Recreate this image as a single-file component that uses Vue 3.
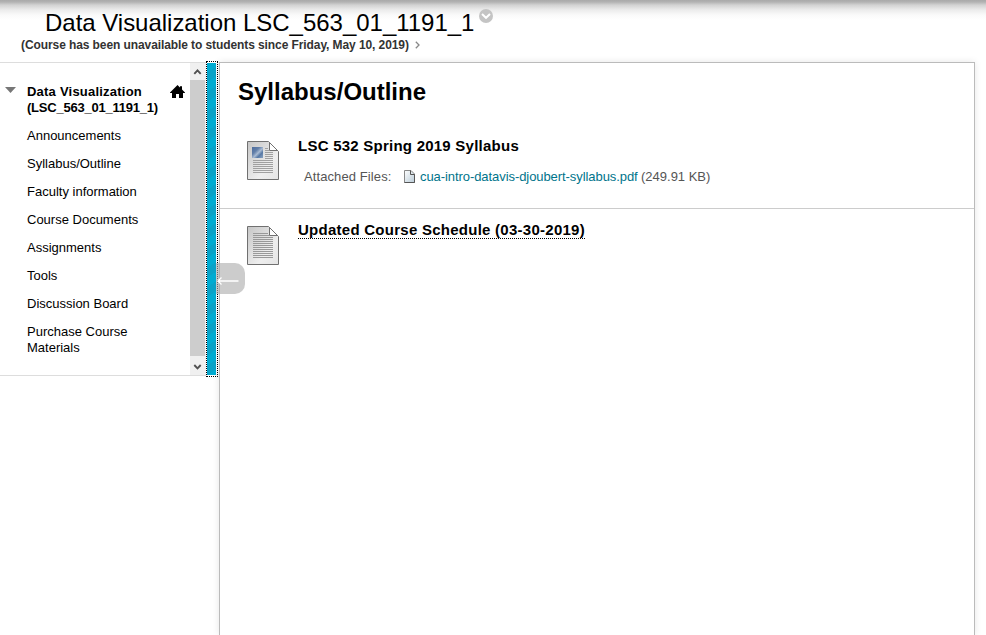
<script setup>
const links = [
  'Announcements', 'Syllabus/Outline', 'Faculty information', 'Course Documents',
  'Assignments', 'Tools', 'Discussion Board', 'Purchase Course Materials',
]
const items = [
  {
    title: 'LSC 532 Spring 2019 Syllabus',
    picture: true,
    file: { name: 'cua-intro-datavis-djoubert-syllabus.pdf', size: '(249.91 KB)' },
  },
  { title: 'Updated Course Schedule (03-30-2019)', link: true },
]
</script>

<template>
  <div class="page">
    <header class="top">
      <div class="title-row">
        <h1>Data Visualization LSC_563_01_1191_1</h1>
        <svg class="badge" width="14" height="14" viewBox="0 0 14 14">
          <circle cx="7" cy="7" r="7" fill="#c4c4c4" />
          <path d="M3 5 L7 8.8 L11 5" fill="none" stroke="#fff" stroke-width="2" />
        </svg>
      </div>
      <div class="notice">
        <span>(Course has been unavailable to students since Friday, May 10, 2019)</span>
        <svg width="5" height="8" viewBox="0 0 5 8">
          <path d="M.8 .8 L4 4 L.8 7.2" fill="none" stroke="#888" stroke-width="1.3" />
        </svg>
      </div>
    </header>

    <div class="body">
      <aside class="side">
        <nav class="menu">
          <div class="course">
            <svg class="tri" width="11" height="6" viewBox="0 0 11 6"><path d="M0 0H11L5.5 6Z" fill="#777" /></svg>
            <strong><span class="wide">Data Visualization</span> <span class="tight">(LSC_563_01_1191_1)</span></strong>
            <svg class="home" width="15" height="13" viewBox="0 0 15 13">
              <path d="M7.5 0 L10 2.5 V1.2 H12 V4.5 L15 7.5 V8 H13 V13 H9 V9 H6 V13 H2 V8 H0 V7.5 Z" fill="#000" />
            </svg>
          </div>
          <a v-for="l in links" :key="l">{{ l }}</a>
        </nav>
        <div class="scroll">
          <svg width="16" height="17" viewBox="0 0 16 17">
            <path d="M4.3 10.8 L7.5 7.4 L10.7 10.8" fill="none" stroke="#505050" stroke-width="1.9" />
          </svg>
          <div class="thumb"></div>
          <svg width="16" height="19" viewBox="0 0 16 19">
            <path d="M4.3 9 L7.5 12.3 L10.7 9" fill="none" stroke="#505050" stroke-width="1.9" />
          </svg>
        </div>
      </aside>

      <div class="splitter">
        <div class="teal"></div>
        <div class="handle">
          <svg width="30" height="31" viewBox="0 0 30 31">
            <path d="M2.5 18H22.5M5.5 14.5L2 18L5.5 21.5" fill="none" stroke="#fff" stroke-width="1.3" />
          </svg>
        </div>
      </div>

      <main class="content">
        <h2>Syllabus/Outline</h2>
        <section v-for="it in items" :key="it.title" class="item">
          <svg class="doc" width="32" height="39" viewBox="0 0 32 39">
            <defs>
              <linearGradient id="paper" x1="0" y1="0" x2="1" y2="1">
                <stop offset="0" stop-color="#c6c6c6" />
                <stop offset=".65" stop-color="#eeeeee" />
                <stop offset="1" stop-color="#e4e4e4" />
              </linearGradient>
              <linearGradient id="photo" x1="0" y1="0" x2="1" y2="1">
                <stop offset="0" stop-color="#4c6c9d" />
                <stop offset=".35" stop-color="#627fa9" />
                <stop offset=".55" stop-color="#a9bbd2" />
                <stop offset=".72" stop-color="#5779a6" />
                <stop offset="1" stop-color="#8ca4c2" />
              </linearGradient>
            </defs>
            <path d="M.5 .5H21.5L31.5 10.5V38.5H.5Z" fill="url(#paper)" stroke="#707070" />
            <path d="M22.5 1.5V9.5H30.5Z" fill="#fff" stroke="#707070" />
            <template v-if="it.picture">
              <path d="M18 7.5H21M18 9.5H22M18 11.5H26M18 13.5H26M18 15.5H26M18 17.5H26" stroke="#a0a0a0" />
              <path d="M6 19.5H26M6 21.5H26M6 23.5H26M6 25.5H26M6 27.5H26M6 29.5H26M6 31.5H26" stroke="#a0a0a0" />
              <rect x="5" y="6" width="11" height="11" fill="url(#photo)" />
            </template>
            <path
              v-else
              d="M6 7.5H21M6 9.5H22M6 11.5H26M6 13.5H26M6 15.5H26M6 17.5H26M6 19.5H26M6 21.5H26M6 23.5H26M6 25.5H26M6 27.5H26M6 29.5H26M6 31.5H26"
              stroke="#999"
            />
          </svg>
          <div class="text">
            <h3><span :class="{ linked: it.link }">{{ it.title }}</span></h3>
            <div v-if="it.file" class="files">
              <span class="label">Attached Files:</span>
              <svg width="11" height="13" viewBox="0 0 11 13">
                <defs>
                  <linearGradient id="mini" x1="0" y1="0" x2="1" y2="1">
                    <stop offset="0" stop-color="#fff" />
                    <stop offset="1" stop-color="#b9cbd7" />
                  </linearGradient>
                </defs>
                <path d="M.5 .5H7L10.5 4V12.5H.5Z" fill="url(#mini)" stroke="#888" />
                <path d="M6.5 .5V4.5H10.5V12.5H.5" fill="none" stroke="#555" />
              </svg>
              <a>{{ it.file.name }}</a>
              <span class="size">{{ it.file.size }}</span>
            </div>
          </div>
        </section>
      </main>
    </div>
  </div>
</template>

<style>
body { margin: 0; overflow: hidden; background: #fff; }
</style>

<style scoped>
* { box-sizing: border-box; }
.page { height: 635px; overflow: hidden; font-family: "Liberation Sans", Arial, sans-serif; font-size: 13px; color: #000; display: flex; flex-direction: column; }
.top { height: 62px; flex: none; padding-top: 9px; background: linear-gradient(#a9a9a9 0, #b2b2b2 2px, #d2d2d2 5px, #ececec 10px, #fafafa 15px, #fff 20px); }
.title-row { display: flex; padding-left: 45px; height: 28px; }
h1 { margin: 0; font-size: 24px; line-height: 28px; font-weight: 400; white-space: nowrap; width: 434px; letter-spacing: -.02px; }
h2, h3 { margin: 0; }
.notice { display: flex; align-items: center; gap: 6px; padding-left: 21px; height: 16px; font-size: 12px; font-weight: 700; color: #333; white-space: nowrap; }
.notice span { width: 388px; letter-spacing: -.09px; }
.body { flex: 1; display: flex; align-items: flex-start; }
.side { width: 206px; height: 314px; flex: none; display: flex; border-top: 1px solid #ddd; border-bottom: 1px solid #ddd; }
.menu { width: 190px; padding-top: 21px; line-height: 16px; display: flex; flex-direction: column; gap: 12px; }
.menu a { padding-left: 27px; width: 160px; }
.course { display: flex; align-items: flex-start; padding-left: 5px; }
.course strong { width: 138px; margin-left: 11px; }
.wide { letter-spacing: .22px; }
.tight { letter-spacing: -.23px; }
.tri { margin-top: 3px; }
.home { margin: 1px 0 0 5px; flex: none; }
.scroll { width: 16px; background: #f0f0f0; display: flex; flex-direction: column; }
.scroll svg { display: block; flex: none; }
.thumb { flex: 1; width: 15px; background: #cdcdcd; }
.splitter { position: relative; width: 13px; height: 316px; margin-top: -1px; flex: none; }
.teal { width: 12px; height: 316px; border: 1px dotted #000; padding: 1px 1px 1px 0; background: repeating-linear-gradient(145deg, #00abd1 0 8px, #08a2c7 8px 16px) content-box; }
.handle { position: absolute; left: 10px; top: 202px; width: 29px; height: 31px; border-radius: 0 10px 10px 0; background: rgba(170, 170, 170, .6); z-index: 2; }
.handle svg { display: block; }
.content { width: 756px; height: 573px; border: 1px solid #bbb; border-bottom: 0; box-shadow: 0 0 7px rgba(0, 0, 0, .1); background: #fff; }
h2 { font-size: 24px; line-height: 28px; padding: 15px 0 0 18px; }
.item { display: flex; padding: 9px 0 0 27px; }
h2 + .item { height: 103px; padding-top: 35px; border-bottom: 1px solid #ccc; }
.item + .item { padding-top: 17px; }
.doc { display: block; flex: none; }
.text { padding-left: 19px; margin-top: -5px; }
.item + .item .text { margin-top: -6px; }
h3 { font-size: 15px; line-height: 20px; white-space: nowrap; letter-spacing: .24px; }
.linked { border-bottom: 1px dotted #000; letter-spacing: .26px; }
.files { display: flex; align-items: center; padding-left: 6px; height: 16px; margin-top: 12px; color: #555; white-space: nowrap; }
.label { width: 100px; letter-spacing: .1px; }
.files a { margin-left: 5px; width: 221px; color: #00748b; letter-spacing: -.07px; }
</style>
